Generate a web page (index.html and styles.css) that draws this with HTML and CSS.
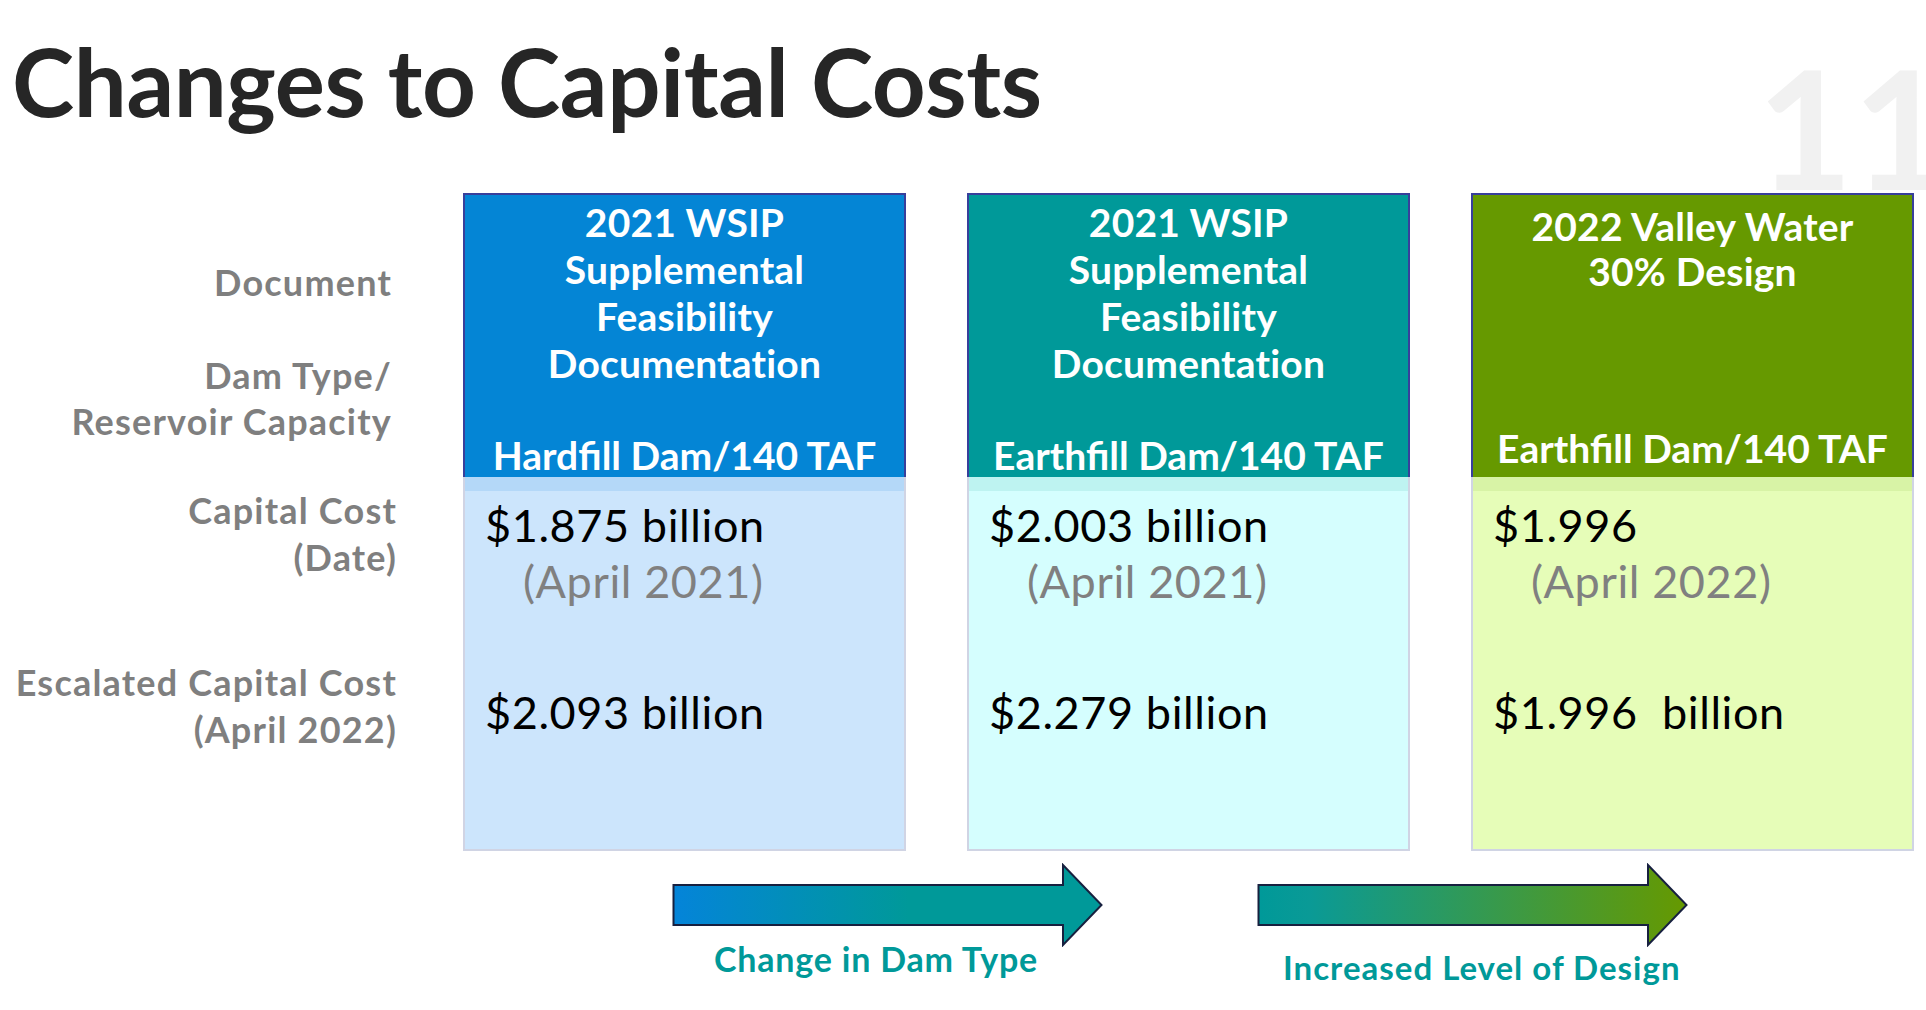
FILE: index.html
```html
<!DOCTYPE html>
<html lang="en">
<head>
<meta charset="utf-8">
<title>Changes to Capital Costs</title>
<link rel="stylesheet" href="styles.css">
</head>
<body>
<div class="slide">
  <div class="slide-num">11</div>
  <h1 class="title">Changes to Capital Costs</h1>

  <div class="table">
    <div class="labels">
      <div class="lbl lbl-doc">Document</div>
      <div class="lbl lbl-dam">Dam Type/<br>Reservoir Capacity</div>
      <div class="lbl lbl-cap">Capital Cost<br>(Date)</div>
      <div class="lbl lbl-esc">Escalated Capital Cost<br>(April 2022)</div>
    </div>

    <div class="col col-blue">
      <div class="col-head">
        <div class="doc">2021 WSIP<br>Supplemental<br>Feasibility<br>Documentation</div>
        <div class="dam">Hardfill Dam/140 TAF</div>
      </div>
      <div class="col-body">
        <div class="band"></div>
        <div class="cost">$1.875 billion</div>
        <div class="date">(April 2021)</div>
        <div class="cost esc">$2.093 billion</div>
      </div>
    </div>

    <div class="col col-teal">
      <div class="col-head">
        <div class="doc">2021 WSIP<br>Supplemental<br>Feasibility<br>Documentation</div>
        <div class="dam">Earthfill Dam/140 TAF</div>
      </div>
      <div class="col-body">
        <div class="band"></div>
        <div class="cost">$2.003 billion</div>
        <div class="date">(April 2021)</div>
        <div class="cost esc">$2.279 billion</div>
      </div>
    </div>

    <div class="col col-green">
      <div class="col-head">
        <div class="doc">2022 Valley Water<br>30% Design</div>
        <div class="dam">Earthfill Dam/140 TAF</div>
      </div>
      <div class="col-body">
        <div class="band"></div>
        <div class="cost">$1.996</div>
        <div class="date">(April 2022)</div>
        <div class="cost esc">$1.996&nbsp; billion</div>
      </div>
    </div>
  </div>

  <div class="arrows">
    <div class="arrow-unit arrow-1">
      <svg class="arrow" width="431" height="84" viewBox="0 0 431 84">
        <defs>
          <linearGradient id="g1" x1="0" y1="0" x2="1" y2="0">
            <stop offset="0" stop-color="#0484d9"/>
            <stop offset="0.55" stop-color="#009999"/>
            <stop offset="1" stop-color="#009999"/>
          </linearGradient>
        </defs>
        <path d="M1.5 22 H391 V2 L429.5 42 L391 82 V62 H1.5 Z" fill="url(#g1)" stroke="#17203f" stroke-width="2" stroke-linejoin="miter"/>
      </svg>
      <div class="arrow-label">Change in Dam Type</div>
    </div>
    <div class="arrow-unit arrow-2">
      <svg class="arrow" width="431" height="84" viewBox="0 0 431 84">
        <defs>
          <linearGradient id="g2" x1="0" y1="0" x2="1" y2="0">
            <stop offset="0" stop-color="#009999"/>
            <stop offset="0.12" stop-color="#0a9a96"/>
            <stop offset="1" stop-color="#669900"/>
          </linearGradient>
        </defs>
        <path d="M1.5 22 H391 V2 L429.5 42 L391 82 V62 H1.5 Z" fill="url(#g2)" stroke="#17203f" stroke-width="2" stroke-linejoin="miter"/>
      </svg>
      <div class="arrow-label">Increased Level of Design</div>
    </div>
  </div>
</div>
</body>
</html>
```

FILE: styles.css
```css
html, body {
  margin: 0;
  padding: 0;
  background: #ffffff;
  overflow: hidden;
}

.slide {
  position: relative;
  width: 1926px;
  height: 1010px;
  overflow: hidden;
  font-family: "Lato", "Open Sans", sans-serif;
  background: #ffffff;
}

.slide-num {
  position: absolute;
  left: 1757px;
  top: 44px;
  font-size: 165px;
  line-height: 165px;
  font-weight: 700;
  color: #f1f1f1;
  white-space: nowrap;
  z-index: 0;
}

.title {
  position: relative;
  z-index: 1;
  margin: 0;
  padding: 24px 0 0 12px;
  font-size: 94px;
  line-height: 113px;
  font-weight: 700;
  color: #262626;
  letter-spacing: -0.4px;
}

.table {
  position: relative;
  z-index: 1;
  display: flex;
  margin-top: 56px;
}

.labels {
  width: 397px;
  margin-right: 66px;
  padding-top: 66px;
  text-align: right;
  color: #7f7f7f;
  font-size: 36px;
  font-weight: 700;
  line-height: 46px;
  letter-spacing: 1.2px;
}

.lbl { white-space: nowrap; }
.lbl-doc { padding-right: 5px; }
.lbl-dam { margin-top: 47px; padding-right: 5px; }
.lbl-cap { margin-top: 43px; line-height: 47px; }
.lbl-esc { margin-top: 78px; line-height: 47px; }

.col {
  width: 443px;
  margin-right: 61px;
  display: flex;
  flex-direction: column;
}
.col:last-child { margin-right: 0; }

.col-head {
  box-sizing: border-box;
  height: 284px;
  border: 2px solid #383f9b;
  border-bottom: none;
  padding-top: 4px;
  display: flex;
  flex-direction: column;
  justify-content: space-between;
  text-align: center;
  color: #ffffff;
  font-size: 39px;
  font-weight: 700;
  line-height: 47px;
  letter-spacing: 0.2px;
}

.dam {
  line-height: 43px;
  white-space: nowrap;
  letter-spacing: 0;
}

.col-body {
  box-sizing: border-box;
  height: 374px;
  border: 2px solid #d0d4e4;
  border-top: none;
  font-size: 45px;
  font-weight: 400;
  line-height: 56px;
  letter-spacing: 0.6px;
  color: #000000;
}

.band {
  height: 14px;
  margin-bottom: 6px;
}

.cost {
  padding-left: 20px;
  white-space: nowrap;
}

.date {
  padding-left: 58px;
  color: #808080;
  white-space: nowrap;
}

.esc { margin-top: 75px; }

.col-blue .col-head { background: #0485d5; }
.col-blue .col-body { background: #cce5fc; }
.col-blue .band { background: #b4d8f8; }

.col-teal .col-head { background: #009999; }
.col-teal .col-body { background: #d5fefe; }
.col-teal .band { background: #bef3f1; }

.col-green .col-head { background: #669900; padding-top: 9px; }
.col-green .col-head .doc { line-height: 45px; }
.col-green .dam { margin-bottom: 7px; }
.col-green .col-body { background: #e6fdb8; }
.col-green .band { background: #d8f3a6; }

.arrows {
  display: flex;
  margin-top: 12px;
}

.arrow-unit {
  display: flex;
  flex-direction: column;
  width: 431px;
}

.arrow { display: block; }

.arrow-1 { margin-left: 672px; }
.arrow-2 { margin-left: 154px; }

.arrow-label {
  color: #009999;
  font-weight: 700;
  white-space: nowrap;
}

.arrow-1 .arrow-label {
  margin-top: -7px;
  padding-left: 42px;
  font-size: 34px;
  line-height: 38px;
  letter-spacing: 0.8px;
}

.arrow-2 .arrow-label {
  margin-top: 1px;
  padding-left: 26px;
  font-size: 33px;
  line-height: 38px;
  letter-spacing: 1px;
}
```
